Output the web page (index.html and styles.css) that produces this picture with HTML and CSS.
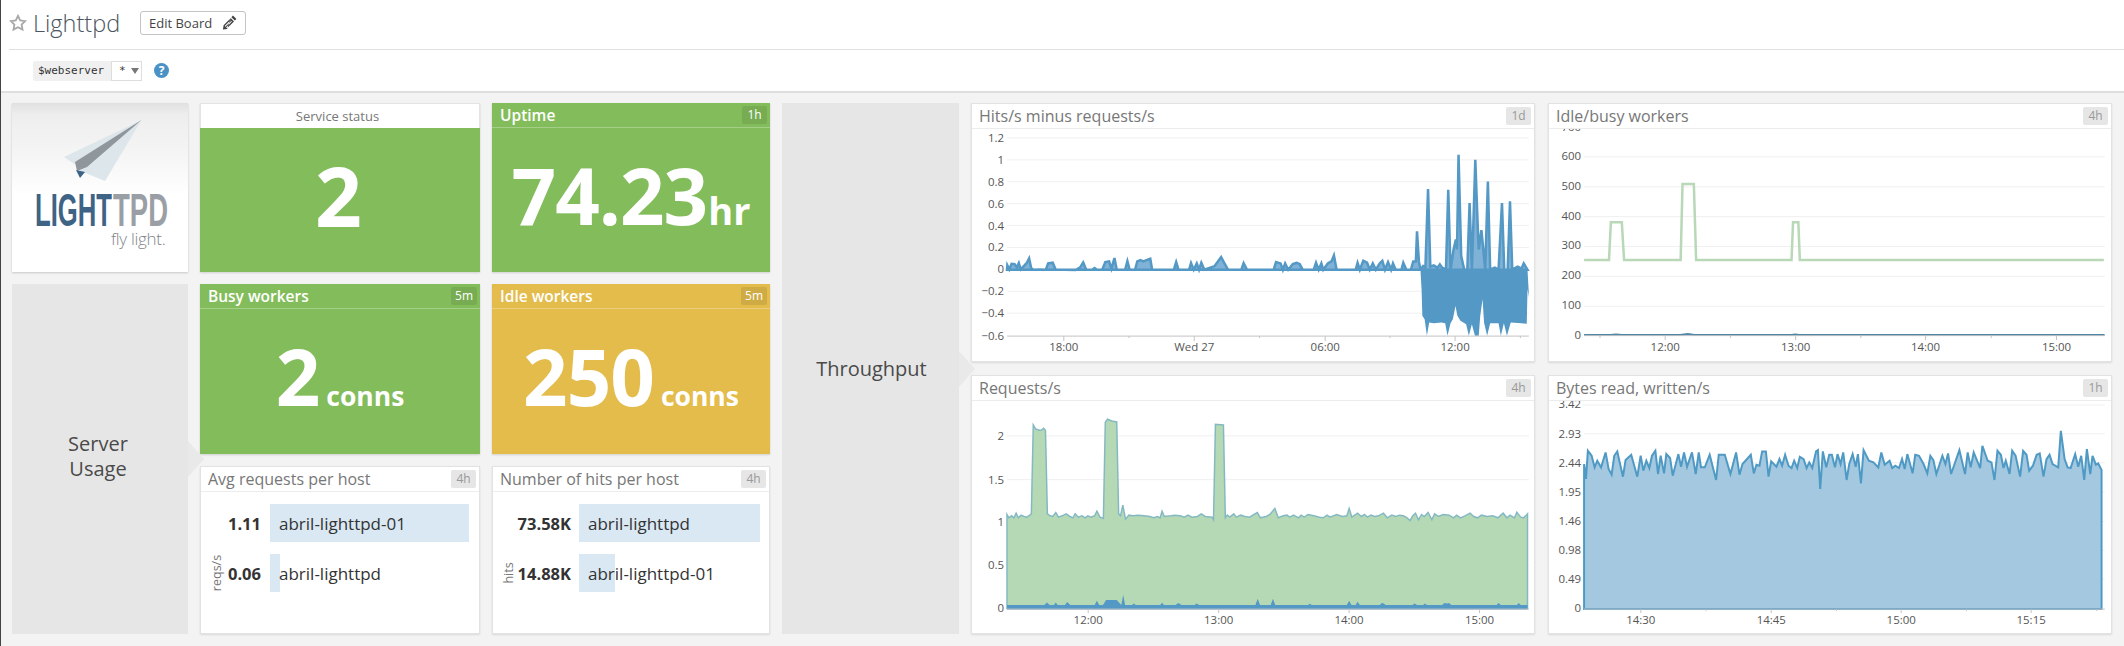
FILE: index.html
```html
<!DOCTYPE html>
<html lang="en">
<head>
<meta charset="utf-8">
<title>Lighttpd</title>
<link rel="stylesheet" href="styles.css">
</head>
<body>
<header class="topbar">
  <div class="title-row">
    <svg class="star" width="18" height="18" viewBox="0 0 18 18"><path d="M9 1.8l2.2 4.6 5 .7-3.6 3.5.9 5L9 13.2l-4.5 2.4.9-5L1.8 7.1l5-.7z"/></svg>
    <h1 class="title">Lighttpd</h1>
    <button class="edit-btn"><span class="edit-label">Edit Board</span>
      <svg class="pencil" width="15" height="15" viewBox="0 0 15 15"><path d="M11 .6l3.4 3.4-1.600 1.600-3.400-3.400zM8.600 3l3.400 3.400-6.900 6.900-1-.9 5.800-5.800-.7-.7-5.800 5.800-.7-.7 5.800-5.800-.9-.9-6 6-.7 4.300 4.300-.7z"/></svg>
    </button>
  </div>
  <div class="filter-row">
    <div class="filter"><span class="filter-name">$webserver</span><span class="filter-value">*<i class="caret"></i></span></div>
    <span class="help">?</span>
  </div>
</header>

<main class="board">
  <section class="left-grid">
    <div class="logo">
      <svg width="176" height="169" viewBox="12 103 176 169">
        <polygon class="plane-light" points="141.5,120 64,157 76,165 78,170 105,181"/>
        <polygon class="plane-grey" points="141.5,120 75,162 77,171 87,167"/>
        <polygon class="plane-dark" points="76,170 80,178 85,172"/>
        <text class="logo-a" transform="translate(35 226) scale(.546 1)">LIGHT</text>
        <text class="logo-b" transform="translate(113 226) scale(.585 1)">TPD</text>
        <text class="logo-c" x="111" y="245">fly light.</text>
      </svg>
    </div>
    <div class="stat green plain">
      <div class="stat-head">Service status</div>
      <div class="stat-value"><span class="num">2</span></div>
    </div>
    <div class="stat green">
      <div class="stat-head">Uptime<span class="badge">1h</span></div>
      <div class="stat-value"><span class="num">74.23</span><span class="unit-hr">hr</span></div>
    </div>
    <div class="group group-usage"><span>Server<br>Usage</span></div>
    <div class="stat green">
      <div class="stat-head">Busy workers<span class="badge">5m</span></div>
      <div class="stat-value"><span class="num">2</span><span class="unit">conns</span></div>
    </div>
    <div class="stat yellow">
      <div class="stat-head">Idle workers<span class="badge">5m</span></div>
      <div class="stat-value"><span class="num">250</span><span class="unit">conns</span></div>
    </div>
    <div class="panel">
      <div class="panel-head">Avg requests per host<span class="badge">4h</span></div>
      <div class="toplist toplist-a">
        <div class="val">1.11</div>
        <div class="bar"><i class="fill" style="width:100%"></i><span>abril-lighttpd-01</span></div>
        <div class="val"><span class="axis-unit">reqs/s</span>0.06</div>
        <div class="bar"><i class="fill" style="width:5%"></i><span>abril-lighttpd</span></div>
      </div>
    </div>
    <div class="panel">
      <div class="panel-head">Number of hits per host<span class="badge">4h</span></div>
      <div class="toplist toplist-b">
        <div class="val">73.58K</div>
        <div class="bar"><i class="fill" style="width:100%"></i><span>abril-lighttpd</span></div>
        <div class="val"><span class="axis-unit">hits</span>14.88K</div>
        <div class="bar"><i class="fill" style="width:20%"></i><span>abril-lighttpd-01</span></div>
      </div>
    </div>
  </section>

  <section class="group group-through"><span>Throughput</span></section>

  <section class="charts">
    <div class="panel">
      <div class="panel-head">Hits/s minus requests/s<span class="badge">1d</span></div>
      <svg class="chart" width="562" height="233" viewBox="972 129 562 233">
        <g class="grid"><path d="M1006 138H1530M1006 160H1530M1006 182H1530M1006 204H1530M1006 226H1530M1006 248H1530M1006 270H1530M1006 292H1530M1006 314H1530"/></g>
        <g class="ylab">
          <text x="1003" y="142">1.2</text><text x="1003" y="164">1</text><text x="1003" y="186">0.8</text><text x="1003" y="208">0.6</text><text x="1003" y="230">0.4</text><text x="1003" y="252">0.2</text><text x="1003" y="274">0</text><text x="1003" y="296">−0.2</text><text x="1003" y="318">−0.4</text><text x="1003" y="341">−0.6</text>
        </g>
        <g transform="translate(960 90) scale(.3827 .3333)">
          <path class="area-blue-soft" d="M120 541 L121 528 126 540 132 523 140 524 146 534 151 521 156 540 166 528 172 520 178 507 184 538 190 541 205 540 222 541 228 522 240 520 248 541 270 541 300 542 312 534 320 519 328 541 345 540 350 536 356 541 370 541 378 518 388 516 394 538 402 506 408 540 430 541 436 515 442 541 456 541 462 516 470 512 478 516 486 512 496 508 501 541 530 541 558 541 564 518 570 541 598 541 603 521 610 541 618 522 624 541 630 520 638 541 665 530 682 503 690 520 700 541 735 541 741 521 750 541 820 541 826 518 838 522 844 541 850 522 858 541 870 524 880 520 888 524 896 541 925 541 931 520 938 541 945 522 950 541 962 522 972 515 978 498 985 541 1035 541 1040 520 1046 541 1055 514 1065 520 1072 541 1080 522 1088 541 1098 522 1105 514 1112 541 1120 518 1128 541 1133 522 1140 541 1155 541 1160 520 1168 541 1180 541 1186 516 1193 516 1196 425 1201 516 1205 541 Z"/>
          <path class="area-solid" d="M1205 541 L1208 600 1210 680 1216 690 1222 740 1228 700 1240 702 1260 700 1270 702 1276 740 1284 702 1290 690 1297 650 1302 680 1310 695 1325 705 1332 740 1340 705 1348 740 1358 740 1362 680 1368 630 1372 700 1380 740 1388 702 1410 702 1416 740 1424 702 1432 740 1442 700 1470 702 1484 704 1486 600 1490 625 1486 541 Z"/>
          <path class="area-blue-soft" d="M1205 541 L1212 530 1218 535 1225 298 1231 532 1240 528 1250 535 1256 525 1262 535 1272 541 1278 300 1284 541 1292 480 1298 450 1301 480 1305 195 1312 500 1320 541 1328 541 1334 340 1340 541 1344 400 1349 210 1355 400 1358 480 1365 422 1370 480 1375 541 1382 275 1388 541 1400 535 1410 541 1419 340 1425 541 1434 541 1440 335 1446 541 1460 532 1470 538 1476 522 1486 541 Z"/>
        </g>
        <path class="axis" d="M1006 337H1530M1063 337v5M1194 337v5M1325.500 337v5M1456 337v5M1128.500 337v2M1259.500 337v2M1390.500 337v2M1521.500 337v2"/>
        <g class="xlab"><text x="1063" y="352">18:00</text><text x="1194" y="352">Wed 27</text><text x="1325.500" y="352">06:00</text><text x="1456" y="352">12:00</text></g>
      </svg>
    </div>
    <div class="panel">
      <div class="panel-head">Idle/busy workers<span class="badge">4h</span></div>
      <svg class="chart" width="562" height="233" viewBox="1549 129 562 233">
        <g class="grid"><path d="M1583 157H2106M1583 187H2106M1583 217H2106M1583 247H2106M1583 277H2106M1583 307H2106"/></g>
        <g class="ylab">
          <text x="1580" y="131">700</text><text x="1580" y="160">600</text><text x="1580" y="190">500</text><text x="1580" y="220">400</text><text x="1580" y="250">300</text><text x="1580" y="280">200</text><text x="1580" y="310">100</text><text x="1580" y="340">0</text>
        </g>
        <g transform="translate(1530 90) scale(.3788 .3333)">
          <path class="line-green" d="M140 512 L206 512 211 398 240 398 246 512 396 512 401 283 431 283 437 512 690 512 694 398 708 398 712 512 1518 512"/>
          <path class="line-blue" d="M140 738 L210 738 225 736 240 738 395 738 415 735 432 738 690 738 700 736 710 738 1520 738"/>
        </g>
        <path class="axis" d="M1583 336.500H2106M1664.500 337v4M1795.500 337v4M1926 337v4M2057.500 337v4M1599 337v2M1730 337v2M1861 337v2M1992 337v2"/>
        <g class="xlab"><text x="1664.500" y="352">12:00</text><text x="1795.500" y="352">13:00</text><text x="1926" y="352">14:00</text><text x="2057.500" y="352">15:00</text></g>
      </svg>
    </div>
    <div class="panel">
      <div class="panel-head">Requests/s<span class="badge">4h</span></div>
      <svg class="chart" width="562" height="233" viewBox="972 400 562 233">
        <g class="grid"><path d="M1006 435H1530M1006 479H1530M1006 522H1530M1006 565H1530"/></g>
        <g class="ylab">
          <text x="1003" y="439">2</text><text x="1003" y="483">1.5</text><text x="1003" y="526">1</text><text x="1003" y="569">0.5</text><text x="1003" y="612">0</text>
        </g>
        <g transform="translate(960 360) scale(.3827 .3333)">
          <path class="area-green" d="M120 745 L120 462 125 472 132 466 138 472 144 458 150 472 157 464 165 468 172 470 180 464 184 460 189 192 195 204 205 208 210 208 216 202 221 208 226 460 233 466 240 468 248 456 255 470 265 466 275 460 285 468 293 472 299 460 307 470 317 466 325 472 332 466 340 470 350 466 356 452 364 470 373 474 378 184 384 175 395 180 408 183 413 460 418 466 424 434 431 476 440 464 450 466 465 464 480 466 495 468 505 472 515 468 522 472 527 452 533 468 550 466 560 464 575 466 585 470 595 464 605 470 620 468 630 460 640 468 658 470 662 478 667 190 688 192 693 472 698 464 705 470 715 460 722 470 733 464 745 468 757 470 765 464 777 456 785 472 800 468 810 462 823 444 832 472 845 466 855 464 862 470 872 464 885 472 892 464 900 470 910 462 925 466 940 470 950 472 960 464 968 470 985 462 1000 468 1012 466 1018 444 1025 470 1040 458 1050 468 1058 462 1066 470 1075 464 1085 468 1095 466 1108 458 1118 472 1130 464 1140 468 1150 464 1160 466 1170 472 1178 480 1185 466 1192 458 1200 478 1208 462 1215 468 1225 456 1235 478 1242 460 1252 468 1265 462 1280 464 1292 472 1300 464 1310 472 1322 466 1335 458 1345 468 1355 472 1365 464 1380 468 1395 466 1408 472 1422 458 1432 472 1440 464 1452 472 1458 455 1468 470 1476 472 1486 460 L1486 745 Z"/>
          <path class="area-solid" d="M120 748 L120 735 218 735 225 727 232 735 243 735 248 727 253 735 272 735 278 726 286 735 350 735 356 722 362 735 372 735 380 720 408 720 420 735 425 704 430 735 448 735 453 730 458 735 522 735 527 728 532 735 562 735 570 729 578 735 612 735 618 730 624 735 772 735 778 716 784 735 812 735 818 716 824 735 910 735 915 731 920 735 1012 735 1018 722 1024 735 1035 735 1040 725 1046 735 1098 735 1105 728 1114 735 1184 735 1190 730 1196 735 1212 735 1217 730 1222 735 1262 735 1268 729 1275 730 1280 729 1286 735 1405 735 1410 729 1416 735 1458 735 1463 729 1468 735 1486 735 1486 748 Z"/>
        </g>
        <path class="axis" d="M1006 609H1530M1087.500 609v4M1218.500 609v4M1349.500 609v4M1480.500 609v4"/>
        <g class="xlab"><text x="1087.500" y="624">12:00</text><text x="1218.500" y="624">13:00</text><text x="1349.500" y="624">14:00</text><text x="1480.500" y="624">15:00</text></g>
      </svg>
    </div>
    <div class="panel">
      <div class="panel-head">Bytes read, written/s<span class="badge">1h</span></div>
      <svg class="chart" width="562" height="233" viewBox="1549 400 562 233">
        <g class="grid"><path d="M1583 404H2106M1583 433H2106M1583 462H2106M1583 491.500H2106M1583 521H2106M1583 550H2106M1583 579H2106"/></g>
        <g class="ylab">
          <text x="1580" y="407">3.42</text><text x="1580" y="437">2.93</text><text x="1580" y="466">2.44</text><text x="1580" y="495">1.95</text><text x="1580" y="525">1.46</text><text x="1580" y="554">0.98</text><text x="1580" y="583">0.49</text><text x="1580" y="612">0</text>
        </g>
        <g transform="translate(1530 360) scale(.3788 .3333)">
          <path class="area-blue" d="M140 747 L140 310 145 355 150 270 160 285 168 320 175 300 185 320 197 275 205 325 213 342 220 285 228 272 243 348 250 298 265 282 281 348 290 285 297 330 305 300 313 322 320 285 329 270 336 340 343 285 352 338 358 280 368 292 375 345 390 280 397 318 405 275 413 318 426 275 436 340 444 275 450 320 460 320 473 282 490 358 497 282 513 282 528 340 543 275 552 342 560 310 582 282 590 338 597 312 605 315 612 272 622 272 629 348 636 302 650 318 658 295 665 315 673 282 682 315 690 322 697 300 705 322 712 288 722 295 730 322 737 305 745 322 755 272 760 268 766 385 773 272 782 320 790 282 797 282 805 320 812 280 820 310 827 275 836 358 843 310 852 280 860 318 866 280 874 368 881 268 895 300 907 305 920 320 928 275 937 312 950 300 957 322 965 315 975 322 983 295 990 325 997 280 1011 338 1018 282 1028 285 1040 310 1050 338 1058 285 1066 298 1074 340 1090 285 1098 310 1105 278 1113 340 1135 268 1150 340 1157 275 1165 320 1173 275 1190 322 1196 255 1210 300 1220 305 1228 358 1236 270 1245 282 1252 322 1258 300 1268 340 1275 270 1284 285 1296 348 1304 270 1313 282 1320 330 1330 315 1340 282 1348 278 1358 348 1366 295 1374 282 1382 310 1397 320 1404 210 1414 295 1422 320 1430 322 1442 280 1450 318 1458 285 1466 358 1473 265 1482 340 1488 285 1497 312 1503 308 1512 328 L1512 747 Z"/>
        </g>
        <path class="axis" d="M1583 609H2106M1640 609v4M1771 609v4M1901.500 609v4M2032 609v4M1705.500 609v2M1836.500 609v2M1967 609v2M2098 609v2"/>
        <g class="xlab"><text x="1640" y="624">14:30</text><text x="1771" y="624">14:45</text><text x="1901.500" y="624">15:00</text><text x="2032" y="624">15:15</text></g>
      </svg>
    </div>
  </section>
</main>
</body>
</html>
```
FILE: styles.css
```css
* { box-sizing: border-box; }
html, body { margin: 0; height: 100%; }
body {
  width: 2124px;
  height: 646px;
  overflow: hidden;
  background: #f3f3f3;
  border-left: 1px solid #444;
  font-family: "Open Sans", "Liberation Sans", sans-serif;
  color: #444;
}

/* top bar */
.topbar { background: #fff; height: 93px; border-bottom: 2px solid #dedede; }
.title-row {
  height: 50px;
  margin-left: 8px;
  padding-bottom: 4px;
  border-bottom: 1px solid #e0e0e0;
  display: flex;
  align-items: center;
}
.star { fill: none; stroke: #a8a8a8; stroke-width: 1.8; }
.title { margin: 0 0 0 6px; font-weight: 300; font-size: 23.500px; color: #4a5560; width: 107px; }
.edit-btn {
  display: flex;
  align-items: center;
  justify-content: space-between;
  width: 106px;
  height: 24px;
  padding: 0 8px;
  background: #fff;
  border: 1px solid #c4c4c4;
  border-radius: 3px;
  font-family: inherit;
  font-size: 13px;
  color: #444;
}
.edit-label { white-space: nowrap; }
.pencil { fill: #444; flex: none; }
.filter-row { height: 41px; padding: 11px 0 0 32px; display: flex; align-items: flex-start; }
.filter { display: flex; height: 20px; width: 109px; background: #f0f0f0; border-radius: 2px; }
.filter-name { width: 78px; padding-left: 5px; font: 11px/20px "DejaVu Sans Mono", monospace; color: #333; }
.filter-value {
  flex: 1;
  display: flex;
  align-items: center;
  gap: 5px;
  padding-left: 7px;
  background: #fff;
  border: 1px solid #ddd;
  font: 11px/18px "DejaVu Sans Mono", monospace;
  color: #333;
}
.caret { border: 4px solid transparent; border-top: 6px solid #777; border-bottom: 0; }
.help {
  margin: 2px 0 0 12px;
  width: 15px;
  height: 15px;
  border-radius: 50%;
  background: #4a92c6;
  color: #fff;
  font-size: 12px;
  font-weight: 700;
  line-height: 15px;
  text-align: center;
}

/* board */
.board { display: flex; gap: 12px; padding: 10px 0 0 11px; }
.left-grid {
  display: grid;
  grid-template-columns: 176px 280px 278px;
  grid-template-rows: 169px 170px 168px;
  gap: 12px;
}
.logo {
  background: linear-gradient(#e0e0e0 0, #eeeeee 7%, #f3f3f3 25%, #ffffff 55%);
  box-shadow: 0 1px 2px rgba(0,0,0,.18);
}
.logo svg { display: block; }
.plane-light { fill: #dde6ea; }
.plane-grey { fill: #8f979c; }
.plane-dark { fill: #3f6384; }
.logo-a, .logo-b { font-family: "Liberation Sans", sans-serif; font-size: 47px; font-weight: 700; }
.logo-a { fill: #3f6384; }
.logo-b { fill: #9a9fa5; }
.logo-c { font-size: 17px; font-weight: 300; fill: #808488; letter-spacing: -.3px; }

.group {
  position: relative;
  display: flex;
  align-items: center;
  justify-content: center;
  background: #e6e6e6;
  font-size: 20px;
  line-height: 25px;
  text-align: center;
  color: #4a4a4a;
}
.group-usage { grid-row: 2 / span 2; padding: 0 4px 6px 0; }
.group-through { width: 177px; padding: 0 0 1px 2px; }
.group::after {
  content: "";
  position: absolute;
  left: 100%;
  top: 50%;
  margin-top: -18px;
  border-style: solid;
  border-width: 18px 0 18px 16px;
  border-color: transparent transparent transparent #e9e9e9;
  z-index: 2;
}
.group-usage::after { top: 157px; margin-top: 0; }

.stat { display: flex; flex-direction: column; color: #fff; box-shadow: 0 1px 2px rgba(0,0,0,.15); }
.green { background: #83bd5b; }
.yellow { background: #e3bc4c; }
.stat-head {
  height: 25px;
  flex: none;
  display: flex;
  align-items: center;
  justify-content: space-between;
  padding: 0 3px 0 8px;
  border-bottom: 1px solid rgba(255,255,255,.28);
  font-size: 15.500px;
  font-weight: 600;
}
.plain .stat-head {
  justify-content: center;
  padding: 0 5px 0 0;
  background: #fff;
  border: 1px solid #e4e4e4;
  border-bottom: 0;
  color: #777;
  font-size: 13px;
  font-weight: 400;
}
.badge {
  min-width: 25px;
  height: 18px;
  padding: 0 4px;
  border-radius: 2px;
  background: #e6e6e6;
  color: #999;
  font-size: 12px;
  font-weight: 400;
  line-height: 18px;
  text-align: center;
}
.stat .badge { background: rgba(0,0,0,.09); color: #fff; }
.stat-value {
  flex: 1;
  display: flex;
  align-items: baseline;
  justify-content: center;
  padding-top: 14px;
  line-height: 107px;
}
.plain .stat-value { padding-right: 4px; }
.num { font-size: 78px; font-weight: 700; letter-spacing: -1px; }
.plain .num { font-size: 82px; }
.unit-hr { font-size: 38px; font-weight: 700; margin-left: 1px; }
.unit { font-size: 26.500px; font-weight: 700; margin-left: 7px; }

.panel {
  display: flex;
  flex-direction: column;
  background: #fff;
  border: 1px solid #e2e2e2;
  box-shadow: 0 1px 2px rgba(0,0,0,.1);
  min-width: 0;
}
.panel-head {
  height: 25px;
  flex: none;
  display: flex;
  align-items: center;
  justify-content: space-between;
  padding: 0 3px 0 7px;
  border-bottom: 1px solid #ececec;
  font-size: 16px;
  color: #777;
}

/* top lists */
.toplist { display: grid; row-gap: 12px; grid-auto-rows: 38px; padding-top: 12px; }
.toplist-a { grid-template-columns: 60px 199px; column-gap: 9px; }
.toplist-b { grid-template-columns: 78px 181px; column-gap: 8px; }
.val {
  display: flex;
  align-items: center;
  justify-content: flex-end;
  position: relative;
  font-size: 16.500px;
  font-weight: 700;
  color: #333;
}
.axis-unit {
  position: absolute;
  left: 7px;
  top: 50%;
  transform: translateY(-50%) rotate(180deg);
  writing-mode: vertical-rl;
  font-size: 12.500px;
  font-weight: 400;
  color: #777;
}
.bar { position: relative; display: flex; align-items: center; padding-left: 9px; font-size: 17px; color: #333; }
.bar span { position: relative; }
.fill { position: absolute; left: 0; top: 0; bottom: 0; background: #d9e8f3; }

/* charts */
.charts { display: grid; grid-template-columns: 564px 564px; grid-template-rows: 259px 259px; gap: 13px; }
.chart { display: block; flex: 1; min-height: 0; }
.grid path { stroke: #f0f0f0; stroke-width: 1; fill: none; }
.ylab text { text-anchor: end; font-size: 11.500px; fill: #555; }
.xlab text { text-anchor: middle; font-size: 11.500px; fill: #555; }
.axis { stroke: #c4c4c4; stroke-width: 1; fill: none; }
.area-blue-soft { fill: #7fb2d6; stroke: #5498c5; stroke-width: 2.500; vector-effect: non-scaling-stroke; }
.area-solid { fill: #5498c5; }
.area-green { fill: #b5d9b5; stroke: #85b9c2; stroke-width: 1.500; vector-effect: non-scaling-stroke; }
.area-blue { fill: #a3c8e0; stroke: #4f9ac5; stroke-width: 2; vector-effect: non-scaling-stroke; }
.line-green { fill: none; stroke: #b8d8b8; stroke-width: 2.500; vector-effect: non-scaling-stroke; }
.line-blue { fill: none; stroke: #4f87a8; stroke-width: 2; vector-effect: non-scaling-stroke; }
```
